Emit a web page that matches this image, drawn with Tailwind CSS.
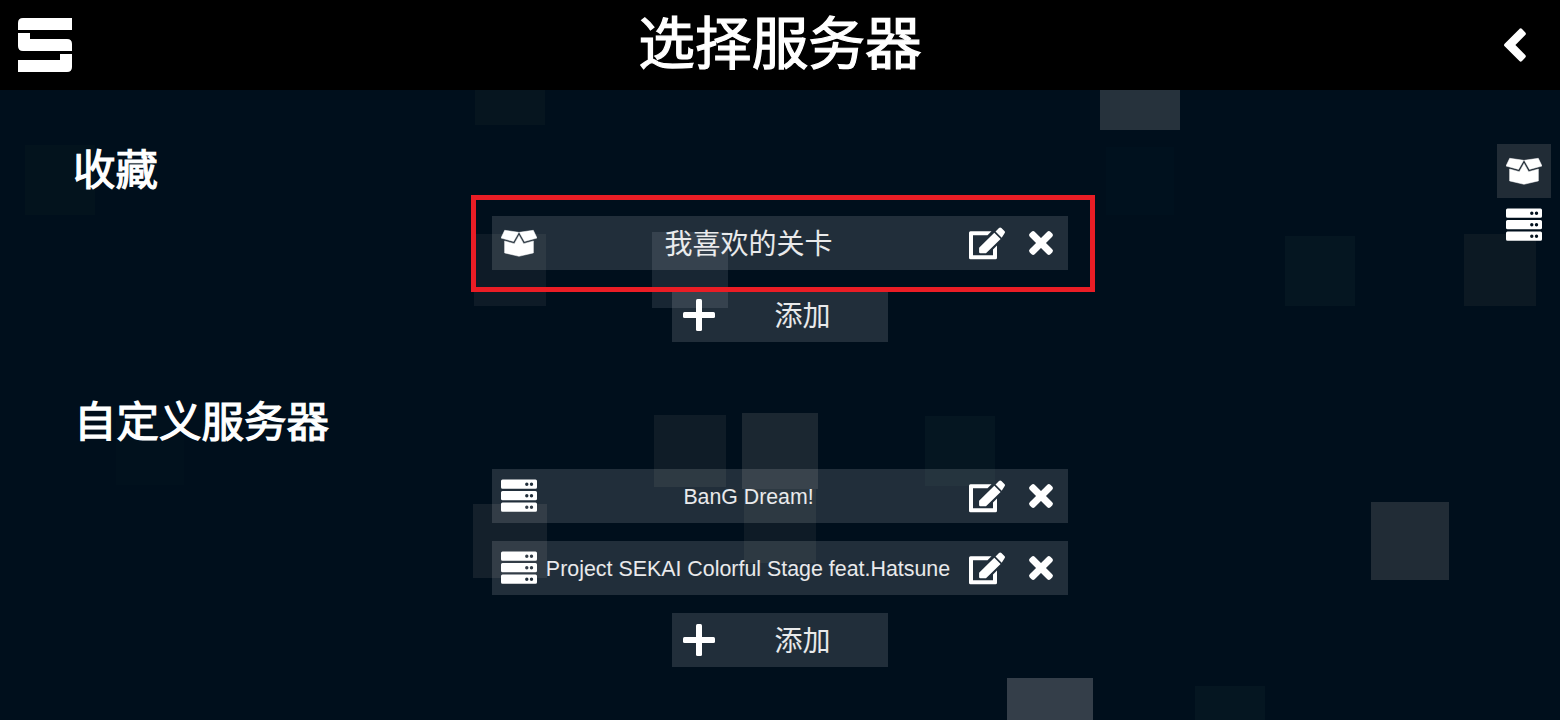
<!DOCTYPE html>
<html lang="zh-CN">
<head>
<meta charset="utf-8">
<title>选择服务器</title>
<script src="https://cdn.jsdelivr.net/npm/@tailwindcss/browser@4"></script>
</head>
<body class="relative flex h-[720px] w-[1560px] flex-col overflow-hidden bg-[#000f1c] font-['Liberation_Sans','Noto_Sans_CJK_SC',sans-serif] text-white">

<svg class="hidden">
  <symbol id="box" viewBox="0 0 36 36">
    <path d="M3.700 5.300 17.700 7.300 12.500 16.400 0 13zM32.300 5.300 18.300 7.300 23.500 16.400 36 13z" stroke="white" stroke-width=".5" stroke-linejoin="round"/>
    <path d="M18 10.400 22.600 18.700 32.400 16V27.900L18 31.300 3.600 27.900V16L13.400 18.700z" stroke="white" stroke-width=".5" stroke-linejoin="round"/>
  </symbol>
  <symbol id="server" viewBox="0 0 36 36">
    <path id="bar" fill-rule="evenodd" d="M1.500 1.500h33A1.500 1.500 0 0 1 36 3V9.300A1.500 1.500 0 0 1 34.500 10.800H1.500A1.500 1.500 0 0 1 0 9.300V3A1.500 1.500 0 0 1 1.500 1.500zM25.800 4.500a1.700 1.700 0 1 0 0 3.400a1.700 1.700 0 0 0 0-3.400zM30.500 4.500a1.700 1.700 0 1 0 0 3.400a1.700 1.700 0 0 0 0-3.400z"/>
    <use href="#bar" y="11.500"/>
    <use href="#bar" y="23"/>
  </symbol>
  <symbol id="edit" viewBox="0 0 36 36">
    <path d="M1.500 6.300H22.500L18.500 10.300H4V30.300H24V24.500L28 20.500V32.800A1.500 1.500 0 0 1 26.500 34.300H1.500A1.500 1.500 0 0 1 0 32.800V7.800A1.500 1.500 0 0 1 1.500 6.300z"/>
    <path d="M25.300 7.700 31.600 14 17 28.300H11.300Q10.100 28.300 10.100 27.100V22.700zM26.500 6.500 30 3Q31.200 1.800 32.400 3L35.400 6Q36.600 7.200 35.400 8.400L32.700 12.700z"/>
  </symbol>
  <symbol id="close" viewBox="0 0 36 36">
    <rect x="3.400" y="14.500" width="29.200" height="7" rx="2.200" transform="rotate(45 18 18)"/>
    <rect x="3.400" y="14.500" width="29.200" height="7" rx="2.200" transform="rotate(-45 18 18)"/>
  </symbol>
  <symbol id="plus" viewBox="0 0 36 36">
    <rect x="2" y="15" width="32" height="6" rx="1.500"/><rect x="15" y="2" width="6" height="32" rx="1.500"/>
  </symbol>
</svg>

<!-- drifting background squares -->
<div class="absolute inset-0 overflow-hidden">
  <i class="absolute left-[475px] top-[55px] size-[70px] bg-[#06151f]"></i>
  <i class="absolute left-[1100px] top-[50px] size-[80px] bg-[#26323c]"></i>
  <i class="absolute left-[25px] top-[145px] size-[70px] bg-[#03131d]"></i>
  <i class="absolute left-[1106px] top-[147px] size-[68px] bg-[#00111e]"></i>
  <i class="absolute left-[474px] top-[234px] size-[72px] bg-[#0e1b27]"></i>
  <i class="absolute left-[652px] top-[232px] size-[76px] bg-[#f0f8ff]/10"></i>
  <i class="absolute left-[1285px] top-[236px] size-[70px] bg-[#051621]"></i>
  <i class="absolute left-[1464px] top-[234px] size-[72px] bg-[#0c1923]"></i>
  <i class="absolute left-[116px] top-[417px] size-[68px] bg-[#01111d]"></i>
  <i class="absolute left-[654px] top-[415px] size-[72px] bg-[#0f1c27]"></i>
  <i class="absolute left-[742px] top-[413px] size-[76px] bg-[#1b2731]"></i>
  <i class="absolute left-[925px] top-[416px] size-[70px] bg-[#051621]"></i>
  <i class="absolute left-[473px] top-[504px] size-[74px] bg-[#14202b]"></i>
  <i class="absolute left-[744px] top-[489px] h-[74px] w-[72px] bg-[#0e1b26]"></i>
  <i class="absolute left-[1371px] top-[502px] size-[78px] bg-[#212c36]"></i>
  <i class="absolute left-[1007px] top-[678px] h-[42px] w-[86px] bg-[#343e49]"></i>
  <i class="absolute left-[1195px] top-[686px] h-[34px] w-[70px] bg-[#051621]"></i>
</div>

<header class="relative flex h-[90px] shrink-0 items-center justify-between bg-black px-[18px]">
  <svg class="size-[54px]" viewBox="0 0 54 54" fill="white">
    <path d="M5 0H54V12H0V5Q0 0 5 0zM0 15H12V21H49Q54 21 54 26V33H5Q0 33 0 28zM42 36H54V49Q54 54 49 54H0V42H42z"/>
  </svg>
  <h1 class="h-[84px] text-[56.700px] leading-[84px] [-webkit-text-stroke:1.200px_white]">选择服务器</h1>
  <div class="flex w-[54px] justify-center">
    <svg class="size-[54px]" viewBox="0 0 54 54" fill="white" stroke="white" stroke-width="3.600" stroke-linejoin="round"><path d="M32.700 12.200 17.900 27 32.700 41.800 36 38.200 24.900 27 36 15.800z"/></svg>
  </div>
</header>

<main class="relative flex flex-1 flex-col">
  <h2 class="mt-[49px] h-[63px] pl-[73px] text-[42.500px] leading-[63px] [-webkit-text-stroke:1.200px_white]">收藏</h2>
  <section class="mt-[14px] flex flex-col items-center gap-[18px] text-white/90">
    <div class="flex h-[54px] w-[576px] items-center bg-white/13">
      <svg class="ml-[9px] size-9 fill-white"><use href="#box"/></svg>
      <span class="w-[423px] pt-[3px] text-center text-[28px] leading-[54px]">我喜欢的关卡</span>
      <svg class="ml-[9px] size-9 fill-white"><use href="#edit"/></svg>
      <svg class="ml-[18px] size-9 fill-white"><use href="#close"/></svg>
    </div>
    <div class="flex h-[54px] w-[216px] items-center bg-white/13">
      <svg class="ml-[9px] size-9 fill-white"><use href="#plus"/></svg>
      <span class="flex-1 pt-[3px] text-center text-[28px] leading-[54px]">添加</span>
    </div>
  </section>
  <h2 class="mt-[49px] h-[63px] pl-[74px] text-[42.500px] leading-[63px] [-webkit-text-stroke:1.200px_white]">自定义服务器</h2>
  <section class="mt-[15px] flex flex-col items-center gap-[18px] text-white/90">
    <div class="flex h-[54px] w-[576px] items-center bg-white/13">
      <svg class="ml-[9px] size-9 fill-white"><use href="#server"/></svg>
      <span class="w-[423px] pt-px text-center text-[21.300px] leading-[54px]">BanG Dream!</span>
      <svg class="ml-[9px] size-9 fill-white"><use href="#edit"/></svg>
      <svg class="ml-[18px] size-9 fill-white"><use href="#close"/></svg>
    </div>
    <div class="flex h-[54px] w-[576px] items-center bg-white/13">
      <svg class="ml-[9px] size-9 shrink-0 fill-white"><use href="#server"/></svg>
      <span class="w-[423px] whitespace-nowrap pr-px pt-px text-center text-[21.400px] leading-[54px]">Project SEKAI Colorful Stage feat.Hatsune</span>
      <svg class="ml-[9px] size-9 shrink-0 fill-white"><use href="#edit"/></svg>
      <svg class="ml-[18px] size-9 fill-white"><use href="#close"/></svg>
    </div>
    <div class="flex h-[54px] w-[216px] items-center bg-white/13">
      <svg class="ml-[9px] size-9 fill-white"><use href="#plus"/></svg>
      <span class="flex-1 pt-[3px] text-center text-[28px] leading-[54px]">添加</span>
    </div>
  </section>
</main>

<!-- section shortcuts -->
<nav class="absolute right-[9px] top-[144px] flex flex-col">
  <a class="flex size-[54px] items-center justify-center bg-[#212c36]"><svg class="size-9 fill-white"><use href="#box"/></svg></a>
  <a class="flex size-[54px] items-center justify-center"><svg class="size-9 fill-white"><use href="#server"/></svg></a>
</nav>

<!-- highlight frame -->
<div class="absolute left-[471px] top-[195px] h-[97px] w-[624px] border-[5px] border-[#ea1d25]"></div>
</body>
</html>
